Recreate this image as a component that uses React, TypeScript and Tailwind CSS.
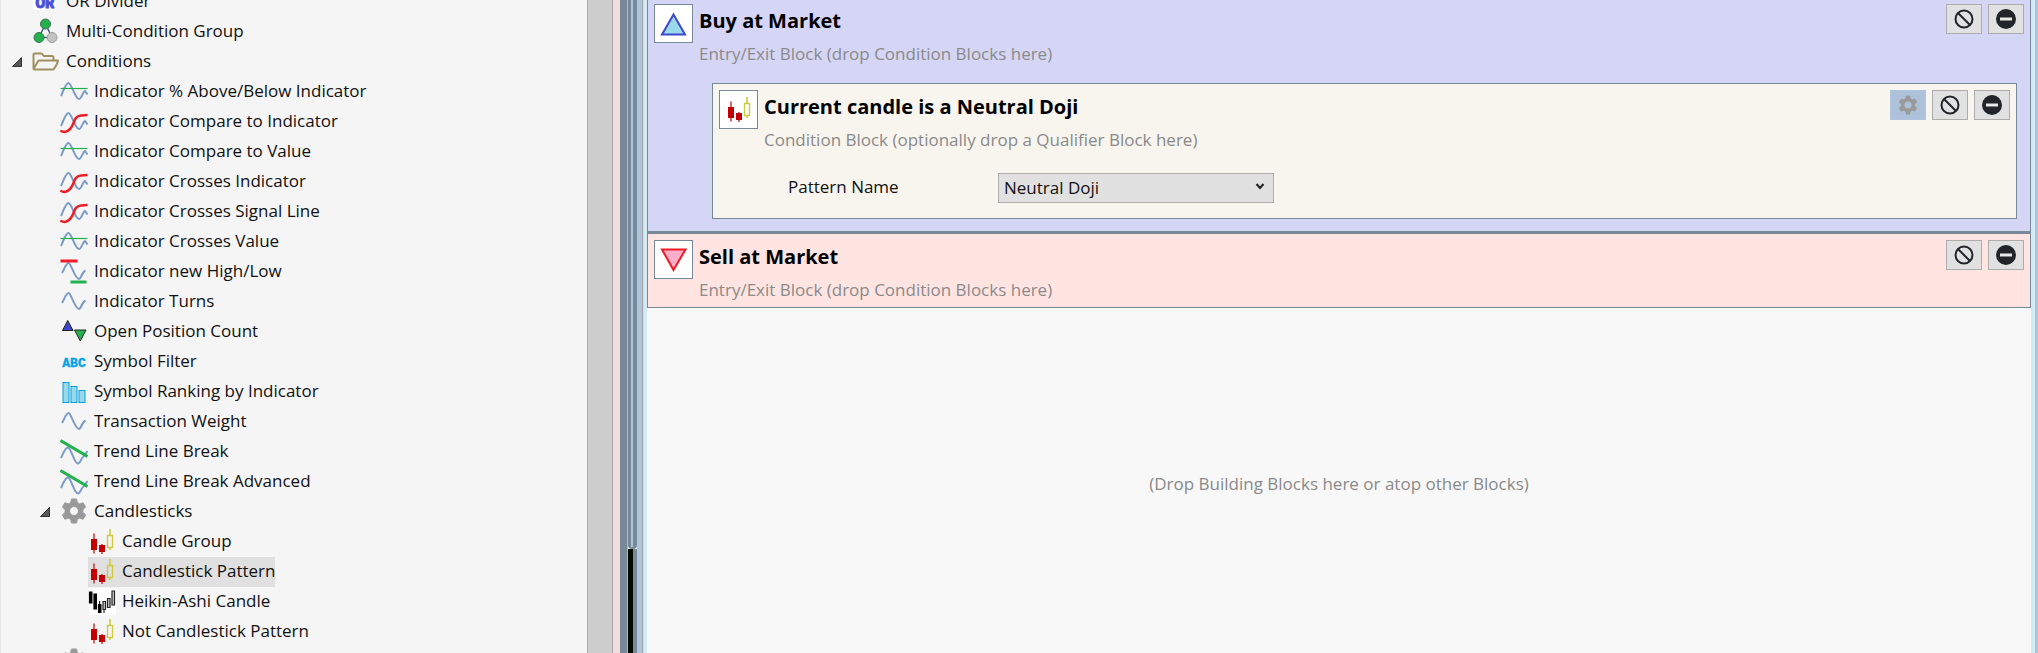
import { useState } from 'react';
import type { ReactNode } from 'react';

type IconName =
  | 'or'
  | 'group'
  | 'folder'
  | 'value'
  | 'compare'
  | 'highLow'
  | 'wave'
  | 'position'
  | 'abc'
  | 'ranking'
  | 'trend'
  | 'gear'
  | 'candles'
  | 'heikin';

interface TreeNode {
  label: string;
  icon: IconName;
  level: 1 | 2 | 3;
  open?: boolean;
}

const NODES: TreeNode[] = [
  { label: 'OR Divider', icon: 'or', level: 1 },
  { label: 'Multi-Condition Group', icon: 'group', level: 1 },
  { label: 'Conditions', icon: 'folder', level: 1, open: true },
  { label: 'Indicator % Above/Below Indicator', icon: 'value', level: 2 },
  { label: 'Indicator Compare to Indicator', icon: 'compare', level: 2 },
  { label: 'Indicator Compare to Value', icon: 'value', level: 2 },
  { label: 'Indicator Crosses Indicator', icon: 'compare', level: 2 },
  { label: 'Indicator Crosses Signal Line', icon: 'compare', level: 2 },
  { label: 'Indicator Crosses Value', icon: 'value', level: 2 },
  { label: 'Indicator new High/Low', icon: 'highLow', level: 2 },
  { label: 'Indicator Turns', icon: 'wave', level: 2 },
  { label: 'Open Position Count', icon: 'position', level: 2 },
  { label: 'Symbol Filter', icon: 'abc', level: 2 },
  { label: 'Symbol Ranking by Indicator', icon: 'ranking', level: 2 },
  { label: 'Transaction Weight', icon: 'wave', level: 2 },
  { label: 'Trend Line Break', icon: 'trend', level: 2 },
  { label: 'Trend Line Break Advanced', icon: 'trend', level: 2 },
  { label: 'Candlesticks', icon: 'gear', level: 2, open: true },
  { label: 'Candle Group', icon: 'candles', level: 3 },
  { label: 'Candlestick Pattern', icon: 'candles', level: 3 },
  { label: 'Heikin-Ashi Candle', icon: 'heikin', level: 3 },
  { label: 'Not Candlestick Pattern', icon: 'candles', level: 3 },
  { label: '', icon: 'gear', level: 2 },
];

const INDENT = { 1: 'pl-1', 2: 'pl-8', 3: 'pl-[60px]' };

const WAVE = 'M2 16C4 13 6 6 8.5 6S15 22 19 22C21 22 22 15 25.5 13.5';
const LONG_WAVE = 'M1 19C3.5 14 5.5 6 8.5 6S15 22 19 22C21.5 22 22.5 15 25 14L27.5 17.5';

const GEAR =
  'M11.5 2h5l.8 3.6 2.3 1.3 3.5-1.1 2.5 4.3-2.7 2.5v2.8l2.7 2.5-2.5 4.3-3.5-1.1-2.3 1.3-.8 3.6h-5l-.8-3.6-2.3-1.3-3.5 1.1-2.5-4.3 2.7-2.5v-2.8L2.4 10.1l2.5-4.3 3.5 1.1 2.3-1.3zM14 9.5a4.5 4.5 0 1 0 0 9 4.5 4.5 0 0 0 0-9z';

function drawIcon(name: IconName): ReactNode {
  switch (name) {
    case 'or':
      return (
        <>
          <rect x="1" y="1" width="23" height="22" rx="2" fill="#fff" />
          <text x="13" y="21" textAnchor="middle" fontSize="14" fontWeight="900" fontFamily="Roboto, sans-serif" fill="#4b52d9" stroke="#4b52d9">OR</text>
        </>
      );
    case 'group':
      return (
        <>
          <path d="M13.5 7 7 20.5h13z" fill="none" stroke="#3f5f7f" strokeWidth="1.5" />
          <circle cx="13.5" cy="7" r="5" fill="#22b14c" stroke="#3c7050" />
          <circle cx="7" cy="20.5" r="5" fill="#22b14c" stroke="#3c7050" />
          <circle cx="20" cy="20.5" r="5" fill="#c3c3c3" stroke="#999" />
        </>
      );
    case 'folder':
      return (
        <path
          d="M1.500 22V7.5Q1.5 6.500 2.5 6.500H9Q10 6.500 11 8T13 9H20Q21.5 9 21.5 10.5V13M1.5 22 6.5 13.5H26Q25.5 17 21.5 22.5H2.5Q1.5 22.5 1.5 22Z"
          fill="none"
          stroke="#a09060"
          strokeWidth="2"
          strokeLinejoin="round"
        />
      );
    case 'value':
      return (
        <>
          <path d={LONG_WAVE} fill="none" stroke="#7a9bc8" strokeWidth="2" />
          <path d="M.5 11.5h27" stroke="#22b14c" strokeWidth="1.2" />
        </>
      );
    case 'compare':
      return (
        <>
          <path d={LONG_WAVE} fill="none" stroke="#7a9bc8" strokeWidth="2" />
          <path d="M.5 23.5Q1.5 25 5 25C9 24 12 20 13.5 16S16 9 21 8.500L27.5 8" fill="none" stroke="#f01c26" strokeWidth="2.5" />
        </>
      );
    case 'highLow':
      return (
        <>
          <path d={WAVE} fill="none" stroke="#7a9bc8" strokeWidth="2" />
          <path d="M.5 4h17" stroke="#f01c26" strokeWidth="3" />
          <path d="M10.5 25h16" stroke="#22b14c" strokeWidth="3" />
        </>
      );
    case 'wave':
      return <path d={WAVE} fill="none" stroke="#7a9bc8" strokeWidth="2" />;
    case 'position':
      return (
        <>
          <path d="M7.7 3.5 13 13.5H2.5z" fill="#3f48cc" stroke="#222" />
          <path d="M14.5 13H26L20.3 24z" fill="#22b14c" stroke="#222" />
        </>
      );
    case 'abc':
      return (
        <text x="14" y="20" textAnchor="middle" fontSize="13" fontWeight="700" fontFamily="Liberation Mono, monospace" fill="#00a2e8" stroke="#00a2e8" strokeWidth=".4">ABC</text>
      );
    case 'ranking':
      return (
        <g fill="#99d9ea" stroke="#00a2e8">
          <rect x="3" y="5.5" width="6" height="20" />
          <rect x="11" y="9.5" width="6" height="16" />
          <rect x="19" y="13.5" width="6" height="12" />
        </g>
      );
    case 'trend':
      return (
        <>
          <path d="M1 21C3 17 5 10.500 8 10.500S14 26.500 18 26.500C20.500 26.500 21 21 23.500 19.500L27.500 14" fill="none" stroke="#7a9bc8" strokeWidth="2" />
          <path d="M.5 3.5 27.5 19.5" stroke="#22b14c" strokeWidth="3" />
        </>
      );
    case 'gear':
      return <path d={GEAR} fill="#999" fillRule="evenodd" strokeLinejoin="round" stroke="#999" />;
    case 'candles':
      return (
        <>
          <path d="M6 6.5v20M14 17v10" stroke="#c8282d" strokeWidth="1.4" />
          <rect x="3" y="12" width="6" height="11" fill="#c40000" />
          <rect x="11" y="18" width="6" height="7" fill="#c40000" />
          <path d="M22 2v6.500M22 20.500V23" stroke="#cdcb3c" strokeWidth="1.6" />
          <rect x="19.5" y="8.5" width="5" height="12" fill="none" stroke="#cdcb3c" strokeWidth="1.4" />
        </>
      );
    case 'heikin':
      return (
        <>
          <rect x="1" y="1" width="27" height="27" fill="#fff" />
          <path d="M2.7 4.5v12M7.2 6.5v16M11.7 17v9" stroke="#000" strokeWidth="3.6" />
          <path d="M11.7 14v4M16 22v4" stroke="#000" />
          <path d="M15 14.5h2.5v8H15zM19.5 11.5H22v9h-2.5zM24 4h2.5v14H24z" fill="#ccc" stroke="#222" strokeWidth="1.2" />
        </>
      );
  }
}

function Icon({ name }: { name: IconName }) {
  return (
    <svg className="h-[30px] w-7 shrink-0" viewBox="0 0 28 30" aria-hidden="true">
      {drawIcon(name)}
    </svg>
  );
}

function ToolTree() {
  const [selected, setSelected] = useState('Candlestick Pattern');

  return (
    <nav className="min-w-0 flex-1 overflow-hidden border-l border-[#e6e6e6] bg-[#f5f5f5]">
      {/* list is scrolled part of a row down */}
      <ul className="-mt-[13px]">
        {NODES.map((node, i) => (
          <li key={i} className={`flex h-[30px] items-center ${INDENT[node.level]}`}>
            <span className="flex w-[27px] shrink-0 pl-[7px]">
              {node.open && (
                <svg className="size-[10px]" viewBox="0 0 10 10" aria-hidden="true">
                  <path d="M9.5.5v9H.5z" fill="#595959" stroke="#333" />
                </svg>
              )}
            </span>
            <button
              type="button"
              aria-label={node.label || 'Group'}
              onClick={() => setSelected(node.label)}
              className={`flex h-[30px] items-center gap-[6px] whitespace-nowrap ${selected === node.label ? 'bg-[#e0e0e0]' : ''}`}
            >
              <Icon name={node.icon} />
              <span className="pb-[2px]">{node.label}</span>
            </button>
          </li>
        ))}
      </ul>
    </nav>
  );
}

function Splitter() {
  return (
    <div className="flex shrink-0">
      <div className="w-[26px] border-x border-[#a8a8a8] bg-[#cdcdcd]" />
      <div className="w-[7px] border-l border-[#e4e4e4] bg-[#f0dedf]" />
      <div className="w-[8px] border-r border-[#a9b7c4] bg-[#778899]" />
      <div className="flex w-[9px] flex-col">
        <div className="flex h-[84%] rounded-b-sm bg-[#778899] pb-[2px] pl-[3px]">
          <div className="w-[2px] bg-[#b0c4de]" />
        </div>
        <div className="flex-1 border-r-4 border-[#778899] bg-[#050a02]" />
      </div>
      <div className="w-[6px] border-r border-[#a0a0a0] bg-[#b0c4de]" />
      <div className="w-[4px] border-l border-[#dddddd] bg-[#d3ebf5]" />
    </div>
  );
}

function SmallButton({ label, active, children }: { label: string; active?: boolean; children: ReactNode }) {
  return (
    <button
      type="button"
      aria-label={label}
      className={`flex h-[30px] w-9 items-center justify-center border ${active ? 'border-[#b0c4de] bg-[#adc2da]' : 'border-[#acacac] bg-[#e1e1e1]'}`}
    >
      {children}
    </button>
  );
}

function BlockButtons({ settings }: { settings?: boolean }) {
  return (
    <div className="flex gap-[6px]">
      {settings && (
        <SmallButton label="Settings" active>
          <svg className="size-[22px]" viewBox="0 0 28 28" aria-hidden="true">
            <path d={GEAR} fill="#999" fillRule="evenodd" />
          </svg>
        </SmallButton>
      )}
      <SmallButton label="Disable">
        <svg className="size-5" viewBox="0 0 20 20" fill="none" stroke="#212529" strokeWidth="2" aria-hidden="true">
          <circle cx="10" cy="10" r="8.5" />
          <path d="m4 4 12 12" />
        </svg>
      </SmallButton>
      <SmallButton label="Remove">
        <svg className="size-5" viewBox="0 0 20 20" aria-hidden="true">
          <circle cx="10" cy="10" r="10" fill="#212529" />
          <rect x="4" y="8.5" width="12" height="3" fill="#e8e8e8" />
        </svg>
      </SmallButton>
    </div>
  );
}

interface BlockProps {
  title: string;
  hint: string;
  icon: ReactNode;
  settings?: boolean;
  className: string;
  children?: ReactNode;
}

function Block({ title, hint, icon, settings, className, children }: BlockProps) {
  return (
    <section className={`border border-[#778899] ${className}`}>
      <header className="flex items-start px-[6px] pt-[6px]">
        <div className="flex size-[39px] shrink-0 items-center justify-center border border-[#778899] bg-white">
          {icon}
        </div>
        <div className="min-w-0 flex-1 pb-[2px] pl-[6px]">
          <h2 className="text-[20px] leading-[34px] font-bold text-black">{title}</h2>
          <p className="text-[17px] leading-[31px] text-[#8a8a8a]">{hint}</p>
        </div>
        <BlockButtons settings={settings} />
      </header>
      {children}
    </section>
  );
}

function Triangle({ down }: { down?: boolean }) {
  return (
    <svg className="size-[37px]" viewBox="0 0 37 37" aria-hidden="true">
      {down ? (
        <path d="M7 8.5h23.5L18.5 29z" fill="#ffaec9" stroke="#ed1c24" strokeWidth="2" />
      ) : (
        <path d="M18.5 9.5 30 29.5H7z" fill="#99d9ea" stroke="#3f48cc" strokeWidth="2" />
      )}
    </svg>
  );
}

function Strategy() {
  const [pattern, setPattern] = useState('Neutral Doji');

  return (
    <main className="flex min-w-0 flex-1 flex-col bg-[#f8f8f8]">
      <Block
        title="Buy at Market"
        hint="Entry/Exit Block (drop Condition Blocks here)"
        icon={<Triangle />}
        className="-mt-[3px] border-b-2 bg-[#d5d5f6] pb-3"
      >
        <Block
          title={`Current candle is a ${pattern}`}
          hint="Condition Block (optionally drop a Qualifier Block here)"
          icon={<Icon name="candles" />}
          settings
          className="mt-3 mr-[13px] ml-16 bg-[#f8f5ee] pb-[15px]"
        >
          <div className="mt-4 flex h-[30px] items-center pl-[75px]">
            <label htmlFor="pattern" className="w-[210px] pb-[2px]">Pattern Name</label>
            <div className="relative">
              <select
                id="pattern"
                value={pattern}
                onChange={(e) => setPattern(e.target.value)}
                className="h-[30px] w-[276px] appearance-none border border-[#acacac] bg-[#e1e1e1] px-[5px] leading-[28px]"
              >
                <option>Neutral Doji</option>
                <option>Hammer</option>
                <option>Morning Star</option>
              </select>
              <svg className="pointer-events-none absolute top-[9px] right-[9px] size-[10px]" viewBox="0 0 10 10" aria-hidden="true">
                <path d="m1.500 2 3.500 4 3.500-4" fill="none" stroke="#222" strokeWidth="2" />
              </svg>
            </div>
          </div>
        </Block>
      </Block>
      <Block
        title="Sell at Market"
        hint="Entry/Exit Block (drop Condition Blocks here)"
        icon={<Triangle down />}
        className="bg-[#ffe4e1]"
      />
      <div className="flex flex-1 items-center justify-center pt-[6px] text-[#8a8a8a]">
        (Drop Building Blocks here or atop other Blocks)
      </div>
    </main>
  );
}

export default function App() {
  return (
    <div className="flex h-screen overflow-hidden font-['Open_Sans','Noto_Sans',sans-serif] text-[17px] text-[#111]">
      <div className="flex w-[647px] shrink-0">
        <ToolTree />
        <Splitter />
      </div>
      <Strategy />
      <div className="w-[4px] shrink-0 bg-[#d3ebf5]" />
      <div className="w-[3px] shrink-0 bg-[#b0c4de]" />
    </div>
  );
}
